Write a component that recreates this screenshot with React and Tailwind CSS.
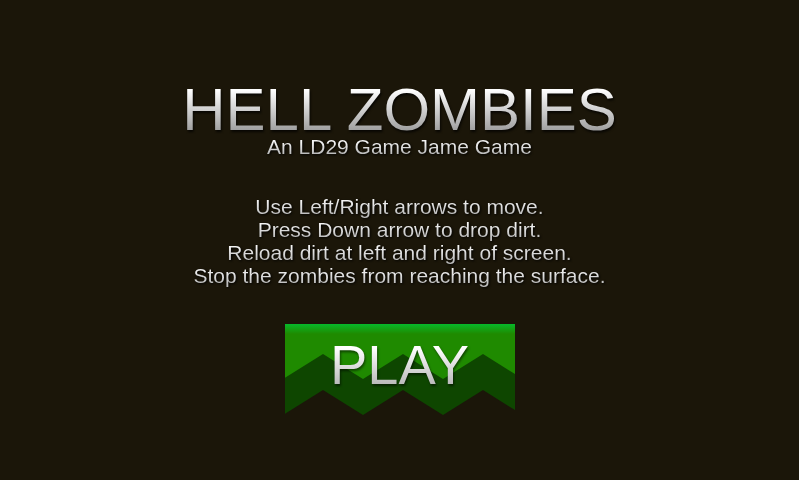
import React from "react";

const font = { fontFamily: '"Liberation Sans", Arial, sans-serif' };

function Line({ children }) {
  return (
    <div className="bg-[linear-gradient(to_bottom,#f4f4f4_25%,#bdbdbd_85%)] bg-clip-text text-transparent drop-shadow-[1px_1px_1px_rgba(0,0,0,0.9)]">
      {children}
    </div>
  );
}

function PlayButton() {
  return (
    <div className="relative mt-[37px] w-[230px] h-[91px] flex items-center justify-center">
      <svg className="absolute inset-0" width="230" height="91" viewBox="0 0 230 91">
        <defs>
          <linearGradient id="topg" x1="0" y1="0" x2="0" y2="1">
            <stop offset="0" stopColor="#06b92b" />
            <stop offset="0.3" stopColor="#0fab1c" />
            <stop offset="1" stopColor="#1f8a00" />
          </linearGradient>
        </defs>
        <rect x="0" y="0" width="230" height="91" fill="#1f8a00" />
        <rect x="0" y="0" width="230" height="10" fill="url(#topg)" />
        <polygon
          points="0,53.75 38,30 78,55 118,30 158,55 198,30 230,50 230,91 0,91"
          fill="#0e4600"
        />
        <polygon
          points="0,89.75 38,66 78,91 118,66 158,91 198,66 230,86 230,91 0,91"
          fill="#1b1609"
        />
      </svg>
      <div
        className="relative -mt-[9px] text-[56px] leading-[56px] bg-[linear-gradient(to_bottom,#ffffff_20%,#b4b4b4_90%)] bg-clip-text text-transparent drop-shadow-[1px_2px_1px_rgba(0,0,0,0.5)]"
        style={font}
      >
        PLAY
      </div>
    </div>
  );
}

export default function App() {
  return (
    <div className="w-full h-[480px] bg-[#1b1609] flex flex-col items-center pt-[81px] overflow-hidden" style={font}>
      <div className="text-[60px] leading-[57px] bg-[linear-gradient(to_bottom,#ffffff_15%,#a2a2a2_85%)] bg-clip-text text-transparent drop-shadow-[1px_2px_1px_rgba(0,0,0,0.7)]">
        HELL ZOMBIES
      </div>
      <div className="text-[21px] leading-[18px]">
        <Line>An LD29 Game Jame Game</Line>
      </div>
      <div className="mt-[39px] text-[21px] leading-[23px] text-center flex flex-col items-center">
        <Line>Use Left/Right arrows to move.</Line>
        <Line>Press Down arrow to drop dirt.</Line>
        <Line>Reload dirt at left and right of screen.</Line>
        <Line>Stop the zombies from reaching the surface.</Line>
      </div>
      <PlayButton />
    </div>
  );
}
